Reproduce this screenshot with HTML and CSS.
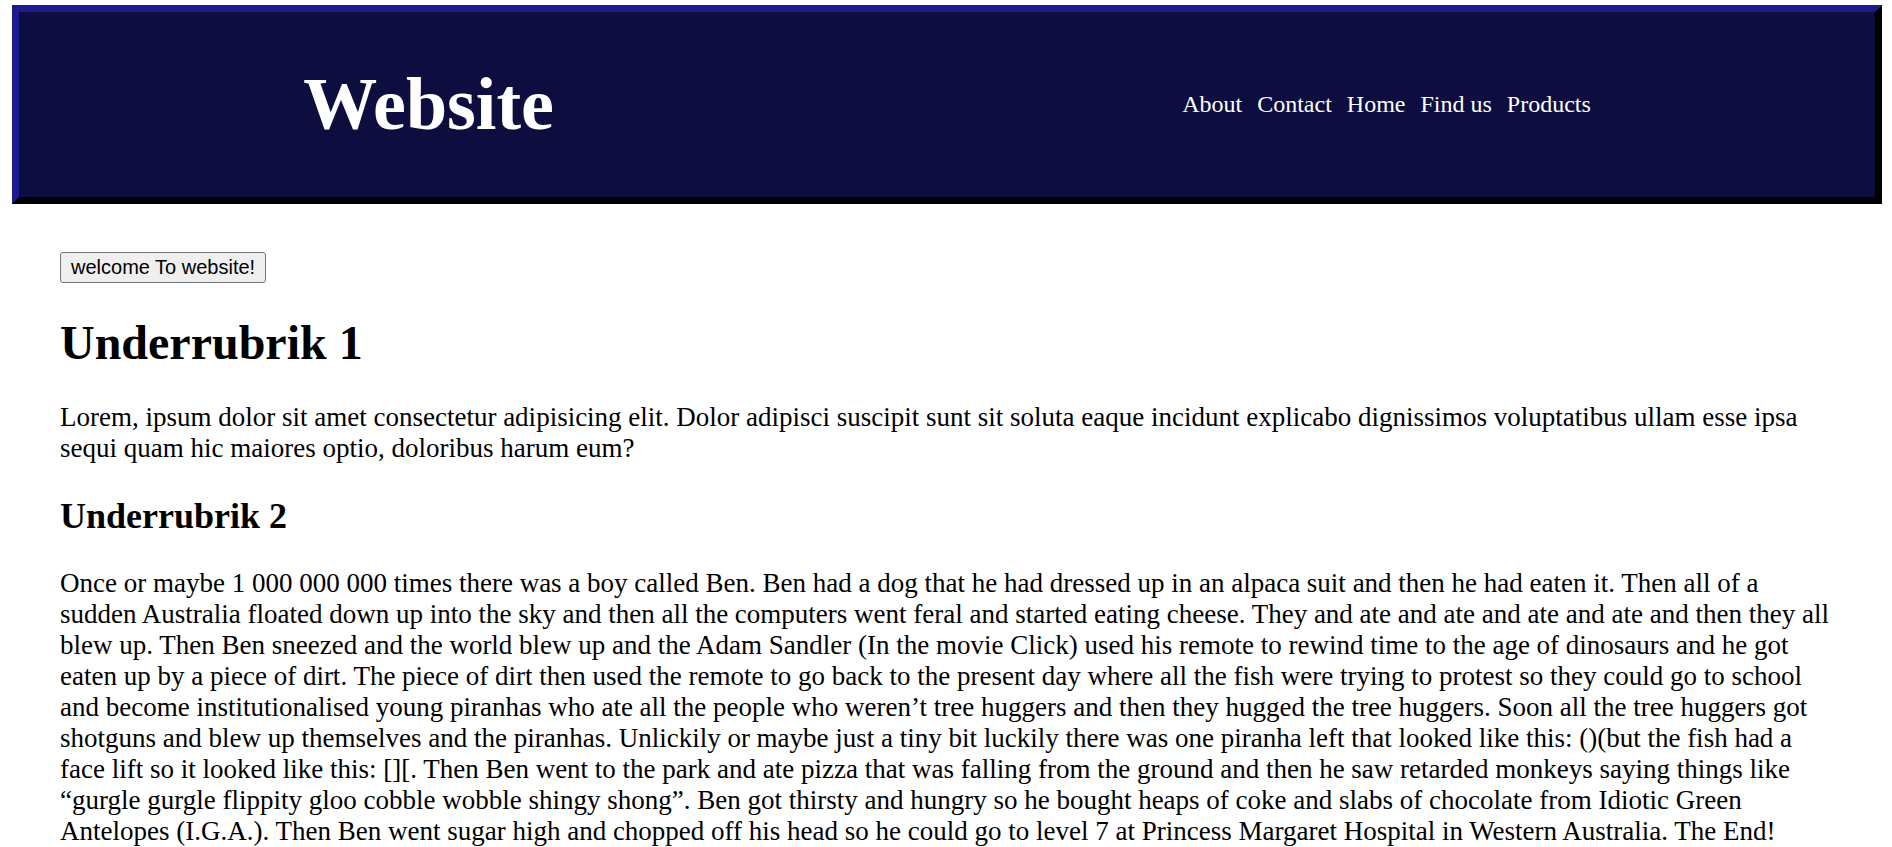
FILE: index.html
```html
<!DOCTYPE html>
<html lang="en">
<head>
<meta charset="utf-8">
<title>Website</title>
<link rel="stylesheet" href="styles.css">
</head>
<body>
<header class="site-header">
  <h1 class="site-title">Website</h1>
  <ul class="site-nav">
    <li><a href="#">About</a></li>
    <li><a href="#">Contact</a></li>
    <li><a href="#">Home</a></li>
    <li><a href="#">Find us</a></li>
    <li><a href="#">Products</a></li>
  </ul>
</header>
<main class="content">
  <button class="welcome-btn" type="button">welcome To website!</button>
  <h1 class="heading-1">Underrubrik 1</h1>
  <p class="text">Lorem, ipsum dolor sit amet consectetur adipisicing elit. Dolor adipisci suscipit sunt sit soluta eaque incidunt explicabo dignissimos voluptatibus ullam esse ipsa sequi quam hic maiores optio, doloribus harum eum?</p>
  <h2 class="heading-2">Underrubrik 2</h2>
  <p class="text">Once or maybe 1 000 000 000 times there was a boy called Ben. Ben had a dog that he had dressed up in an alpaca suit and then he had eaten it. Then all of a sudden Australia floated down up into the sky and then all the computers went feral and started eating cheese. They and ate and ate and ate and ate and then they all blew up. Then Ben sneezed and the world blew up and the Adam Sandler (In the movie Click) used his remote to rewind time to the age of dinosaurs and he got eaten up by a piece of dirt. The piece of dirt then used the remote to go back to the present day where all the fish were trying to protest so they could go to school and become institutionalised young piranhas who ate all the people who weren’t tree huggers and then they hugged the tree huggers. Soon all the tree huggers got shotguns and blew up themselves and the piranhas. Unlickily or maybe just a tiny bit luckily there was one piranha left that looked like this: ()(but the fish had a face lift so it looked like this: [][. Then Ben went to the park and ate pizza that was falling from the ground and then he saw retarded monkeys saying things like “gurgle gurgle flippity gloo cobble wobble shingy shong”. Ben got thirsty and hungry so he bought heaps of coke and slabs of chocolate from Idiotic Green Antelopes (I.G.A.). Then Ben went sugar high and chopped off his head so he could go to level 7 at Princess Margaret Hospital in Western Australia. The End!</p>
</main>
</body>
</html>
```

FILE: styles.css
```css
html, body {
  margin: 0;
  padding: 0;
  background: #ffffff;
}

body {
  font-family: "Liberation Serif", "Times New Roman", serif;
  font-size: 24px;
  color: #000000;
}

.site-header {
  margin: 5px 10px 0 12px;
  height: 185px;
  background: #0d0d40;
  border-style: solid;
  border-width: 7px;
  border-color: #1c1c8e #000000 #000000 #1c1c8e;
  display: flex;
  justify-content: space-around;
  align-items: center;
}

.site-title {
  margin: 0;
  font-size: 74px;
  font-weight: bold;
  color: #ffffff;
}

.site-nav {
  list-style: none;
  margin: 0;
  padding: 0 0 0 60px;
  display: flex;
  gap: 15px;
}

.site-nav a {
  color: #ffffff;
  text-decoration: none;
  font-size: 24px;
}

.content {
  padding: 48px 60px 0 60px;
}

.welcome-btn {
  display: block;
  height: 31px;
  padding: 0 10px;
  font-family: "Liberation Sans", Arial, sans-serif;
  font-size: 20px;
  color: #000000;
  background: #efefef;
  border: 1px solid #767676;
  border-radius: 3px;
}

.heading-1 {
  font-size: 48px;
  font-weight: bold;
  margin: 32px 0;
}

.heading-2 {
  font-size: 36px;
  font-weight: bold;
  margin: 31px 0;
}

.text {
  font-size: 27px;
  margin: 27px 0;
}
```
